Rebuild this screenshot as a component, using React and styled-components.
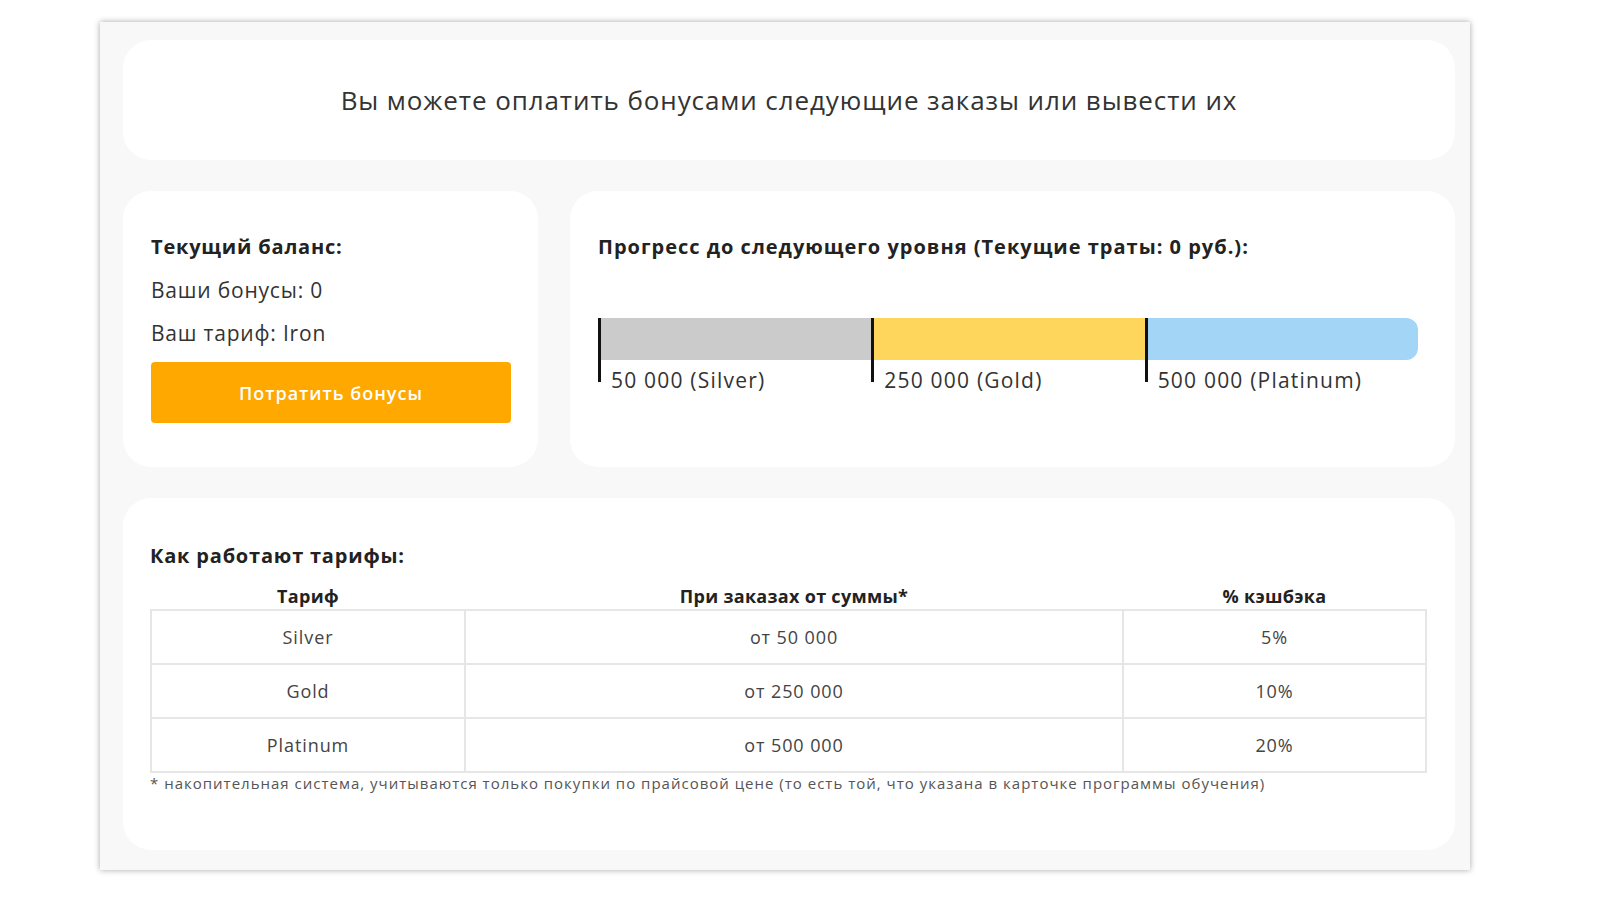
import React from 'react'
import styled, { createGlobalStyle } from 'styled-components'

const GlobalStyle = createGlobalStyle`
    html, body {
        height: 100%;
        overflow: hidden;
    }
    body {
        margin: 0;
        padding-top: 22px;
        box-sizing: border-box;
        background: #ffffff;
        font-family: "Open Sans", Lato, sans-serif;
        color: #333;
    }
`
const Frame = styled.div`
    width: 1370px;
    height: 848px;
    box-sizing: border-box;
    margin-left: 100px;
    padding: 18px 15px 20px 23px;
    background: #f8f8f8;
    box-shadow: 0 0 6px rgba(0,0,0,0.35);
    display: flex;
    flex-direction: column;
    gap: 31px;
`
const Card = styled.div`
    background: #fff;
    border-radius: 28px;
    box-sizing: border-box;
    padding: 44px 28px;
`
const Banner = styled(Card)`
    height: 120px;
    padding: 0;
    display: flex;
    align-items: center;
    justify-content: center;
    font-size: 26px;
    color: #333;
    letter-spacing: 0.9px;
`
const Row = styled.div`
    display: flex;
    gap: 32px;
    height: 276px;
`
const BalanceCard = styled(Card)`
    width: 415px;
    display: flex;
    flex-direction: column;
`
const ProgressCard = styled(Card)`
    flex: 1;
`
const Title = styled.div`
    font-size: 20px;
    font-weight: 700;
    color: #222;
    line-height: 24px;
    letter-spacing: ${p => p.$ls || '0.8px'};
`
const Line = styled.div`
    font-size: 21px;
    color: #333;
    line-height: 24px;
    margin-top: 19px;
    letter-spacing: 0.8px;
`
const Button = styled.button`
    margin-top: 17px;
    width: 360px;
    height: 63px;
    border: none;
    border-radius: 4px;
    background: #ffa800;
    color: #fff;
    font-family: inherit;
    font-size: 18px;
    font-weight: 600;
    letter-spacing: 1px;
    cursor: pointer;
`
const Bar = styled.div`
    margin-top: 59px;
    width: 820px;
    display: flex;
`
const Segment = styled.div`
    flex: 1;
    position: relative;
    height: 42px;
    background: ${p => p.$color};
    border-radius: ${p => (p.$last ? '0 12px 12px 0' : '0')};
    border-left: 3px solid #111;
    box-sizing: border-box;
`
const Tick = styled.div`
    position: absolute;
    left: -3px;
    top: 42px;
    width: 3px;
    height: 22px;
    background: #111;
`
const Label = styled.div`
    position: absolute;
    left: 10px;
    top: 48px;
    font-size: 21px;
    color: #333;
    white-space: nowrap;
    letter-spacing: 1.2px;
`
const TableCard = styled(Card)`
    flex: 1;
    padding: 46px 28px 0 27px;
`
const Table = styled.table`
    margin-top: 15px;
    width: 1277px;
    border-collapse: collapse;
    font-size: 18px;
    color: #444;
`
const Th = styled.th`
    font-weight: 700;
    color: #222;
    font-size: 18px;
    height: 26px;
    padding: 0;
    width: ${p => p.$w};
    letter-spacing: 0.3px;
`
const Td = styled.td`
    border: 2px solid #e6e6e6;
    height: 52px;
    text-align: center;
    padding: 0;
    letter-spacing: 0.9px;
`
const Note = styled.div`
    font-size: 15px;
    line-height: 18px;
    color: #555;
    margin-top: 1px;
    letter-spacing: 1px;
`

const tiers = [
    { name: 'Silver', from: 'от 50 000', pct: '5%' },
    { name: 'Gold', from: 'от 250 000', pct: '10%' },
    { name: 'Platinum', from: 'от 500 000', pct: '20%' },
]
const levels = [
    { color: '#cbcbcb', label: '50 000 (Silver)' },
    { color: '#ffd65c', label: '250 000 (Gold)' },
    { color: '#a3d5f7', label: '500 000 (Platinum)' },
]

const App = () => {
    return (
        <>
            <GlobalStyle />
            <Frame>
                <Banner>Вы можете оплатить бонусами следующие заказы или вывести их</Banner>
                <Row>
                    <BalanceCard>
                        <Title>Текущий баланс:</Title>
                        <Line>Ваши бонусы: 0</Line>
                        <Line>Ваш тариф: Iron</Line>
                        <Button>Потратить бонусы</Button>
                    </BalanceCard>
                    <ProgressCard>
                        <Title $ls="1px">Прогресс до следующего уровня (Текущие траты: 0 руб.):</Title>
                        <Bar>
                            {levels.map((l, i) => (
                                <Segment key={l.label} $color={l.color} $last={i === levels.length - 1}>
                                    <Tick />
                                    <Label>{l.label}</Label>
                                </Segment>
                            ))}
                        </Bar>
                    </ProgressCard>
                </Row>
                <TableCard>
                    <Title>Как работают тарифы:</Title>
                    <Table>
                        <thead>
                            <tr>
                                <Th $w="314px">Тариф</Th>
                                <Th $w="658px">При заказах от суммы*</Th>
                                <Th>% кэшбэка</Th>
                            </tr>
                        </thead>
                        <tbody>
                            {tiers.map(t => (
                                <tr key={t.name}>
                                    <Td>{t.name}</Td>
                                    <Td>{t.from}</Td>
                                    <Td>{t.pct}</Td>
                                </tr>
                            ))}
                        </tbody>
                    </Table>
                    <Note>* накопительная система, учитываются только покупки по прайсовой цене (то есть той, что указана в карточке программы обучения)</Note>
                </TableCard>
            </Frame>
        </>
    )
}

export default App
